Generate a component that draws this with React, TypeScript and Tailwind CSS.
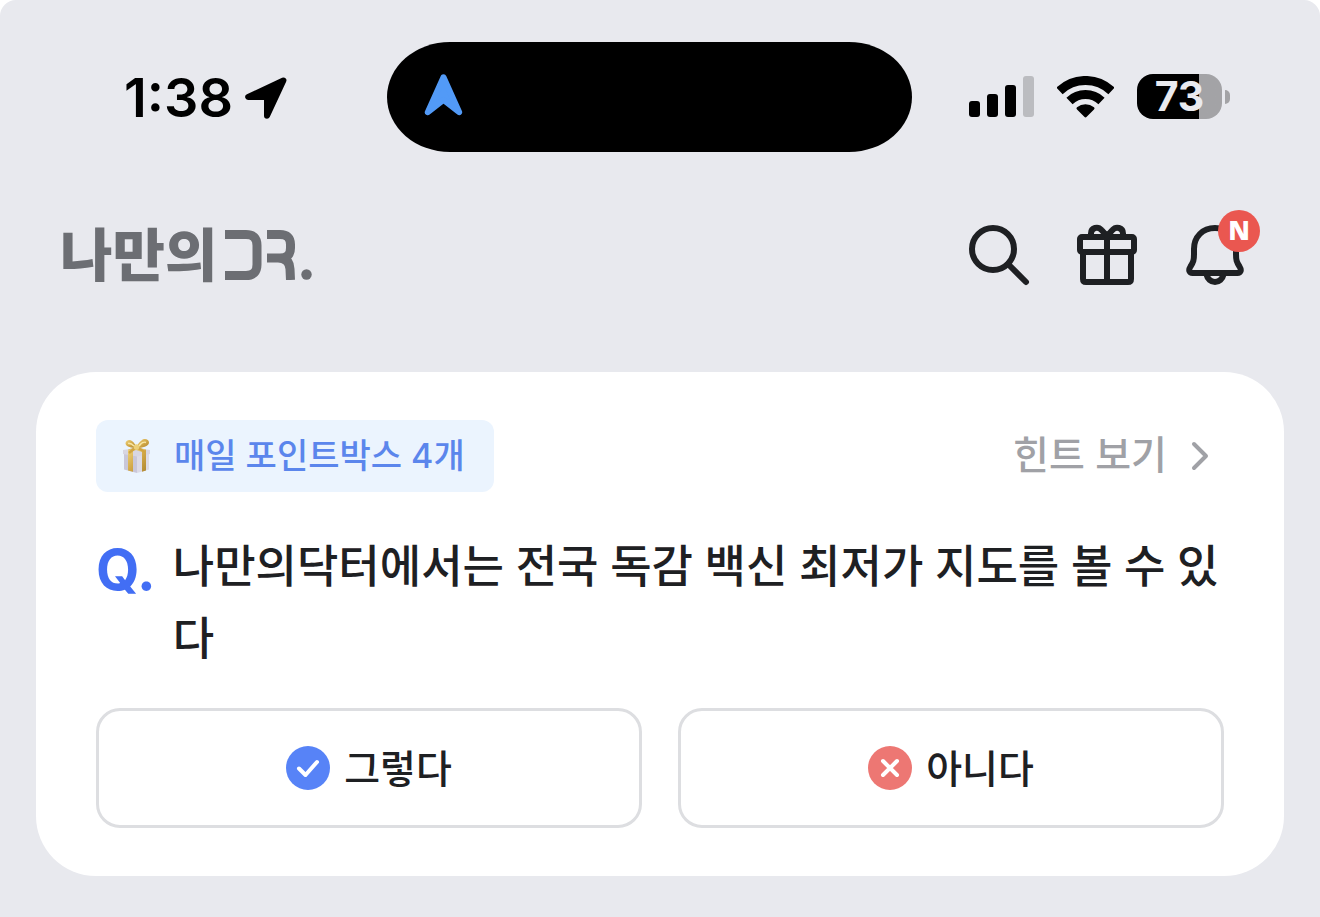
const latin = "font-['Inter','Noto_Sans_CJK_KR',sans-serif]";

function LocationArrow() {
  return (
    <svg className="size-[42px]" viewBox="0 0 42 42" aria-hidden="true">
      <path d="M38.4 3.4 3.2 20H22v18.8Z" fill="#000" stroke="#000" strokeWidth="6" strokeLinejoin="round" />
    </svg>
  );
}

function NavigationArrow() {
  return (
    <svg className="h-[42px] w-[39px]" viewBox="0 0 39 42" aria-hidden="true">
      <path d="M19.5 3.3 3.8 38.2 19.5 25.8 35.2 38.2Z" fill="#529af7" stroke="#529af7" strokeWidth="6" strokeLinejoin="round" />
    </svg>
  );
}

function Signal() {
  return (
    <svg className="h-[42px] w-[65px]" viewBox="0 0 65 42" aria-label="신호 세기" role="img">
      <rect x="0" y="25" width="11" height="16" rx="3" />
      <rect x="18" y="18" width="11" height="23" rx="3" />
      <rect x="36" y="9" width="11" height="32" rx="3" />
      <rect x="54" y="0" width="11" height="41" rx="3" fill="#bbbcc0" />
    </svg>
  );
}

function Wifi() {
  return (
    <svg className="h-[42px] w-[57px]" viewBox="0 0 57 42" aria-label="와이파이" role="img">
      <g fill="none" stroke="#000" strokeWidth="9">
        <path d="M2.500 14.900a37.600 37.600 0 0 1 52 0" />
        <path d="M12.500 24.900a23.300 23.300 0 0 1 32 0" />
      </g>
      <path d="M20 31.200a14 14 0 0 1 17 0q1.200 1 0 2.200l-7.300 7.400q-1.200 1.200-2.400 0L20 33.400q-1.200-1.200 0-2.200Z" />
    </svg>
  );
}

function Battery() {
  return (
    <div className="flex items-center gap-[3px]" aria-label="배터리 73%">
      <div className="flex h-[45px] w-[85px] items-center justify-center rounded-2xl bg-linear-to-r from-black from-73% to-[#a3a3a6] to-73%">
        <span className={`${latin} text-[41px] leading-none font-bold text-[#e9eaef]`}>73</span>
      </div>
      <div className="h-[14px] w-[5px] rounded-r-full bg-[#a3a3a6]" />
    </div>
  );
}

function Logo() {
  return (
    <h1 className="flex items-center gap-2 text-[#6c6e73]" aria-label="나만의DR.">
      <span className="pb-2 text-[57px] leading-[64px] font-black">나만의</span>
      <svg className="h-[50px] w-[87px]" viewBox="0 0 87 50" aria-hidden="true">
        <g fill="none" stroke="currentColor" strokeWidth="9">
          <path d="M0 4.500H21Q32 4.500 32 15.500V34.500Q32 45.500 21 45.500H0" />
          <path d="M42 4.500H55Q65.500 4.500 65.500 14.500V18Q65.500 28 55 28H42M53 28Q64.500 28 65 39L65.500 50" />
        </g>
        <circle cx="81.500" cy="44.500" r="5.200" fill="currentColor" />
      </svg>
    </h1>
  );
}

const stroke = {
  fill: "none",
  stroke: "#1e2023",
  strokeWidth: 6,
  strokeLinecap: "round",
  strokeLinejoin: "round",
} as const;

function SearchIcon() {
  return (
    <svg className="size-[72px]" viewBox="0 0 72 72" aria-hidden="true" {...stroke}>
      <circle cx="30" cy="30" r="21" />
      <path d="m45 45 18 18" />
    </svg>
  );
}

function GiftIcon() {
  return (
    <svg className="size-[72px]" viewBox="0 0 72 72" aria-hidden="true" {...stroke}>
      <rect x="9" y="18" width="54" height="15" rx="2" />
      <path d="M12 33v27q0 3 3 3h42q3 0 3-3V33M36 18v45" />
      <path d="M20 17v-2.500c0-6 7-7.500 10.500-3.500L36 17l5.500-6C45 7 52 8.500 52 14.500V17" />
    </svg>
  );
}

function BellIcon() {
  return (
    <svg className="size-[72px]" viewBox="0 0 72 72" aria-hidden="true" {...stroke}>
      <path d="M36 9C23.500 9 15 18 15 30v5c0 6-.5 8-3.500 12.500C9 51.500 10.500 54 13.500 54h45c3 0 4.500-2.500 2-6.500C57.500 43 57 41 57 35v-5C57 18 48.500 9 36 9Z" />
      <path d="M27.500 55.500c1 4.500 4.500 7.500 8.500 7.500s7.500-3 8.500-7.500" />
    </svg>
  );
}

function GiftBox() {
  return (
    <svg className="h-[36px] w-[30px]" viewBox="0 0 30 36" aria-hidden="true">
      <defs>
        <linearGradient id="gold" x1="0" y1="0" x2="1" y2="1">
          <stop offset="0" stopColor="#efd27a" />
          <stop offset=".5" stopColor="#d2a848" />
          <stop offset="1" stopColor="#b08832" />
        </linearGradient>
      </defs>
      <path d="m2 13 13 2v20L2 31.500Z" fill="#c9c7d9" />
      <path d="m15 15 12-2v18.500L15 35Z" fill="#dddbe6" />
      <path d="m1 12 13-2 14 2v4l-13 2.500L1 16Z" fill="#d8d6e2" />
      <path d="m6 11.500 5 .8v21.500l-5-1.400ZM20 12.500l4-1v21l-4 1.200Z" fill="url(#gold)" />
      <path d="m6 11.500 8-2.500 10 2.500-4 2.500-6-2-4 1.500Z" fill="#dfc06a" />
      <path d="M14 10C10 10 4 9 3.500 5.500 3.500 2 8 1 10 3c2 1.500 4 4 4 7Z" fill="url(#gold)" />
      <path d="M15 10c5 0 12-1.500 12-5.500C27 1 22 0 19.500 2.500 17 4 15 7 15 10Z" fill="url(#gold)" />
      <path d="M12 8c-2-2-4-3-6-2.500M17 8c2-3 5-4.500 7-3.500" fill="none" stroke="#f8e7a4" strokeWidth="1.500" />
      <path d="m13 10-6 5M16 10l7 4" stroke="#d1a442" strokeWidth="2.500" />
      <circle cx="14.500" cy="9" r="2.800" fill="#ecd078" />
    </svg>
  );
}

function Chevron() {
  return (
    <svg className="h-[30px] w-[18px]" viewBox="0 0 18 30" fill="none" stroke="#a0a1a6" strokeWidth="4" strokeLinecap="round" strokeLinejoin="round" aria-hidden="true">
      <path d="m3 3 12 12L3 27" />
    </svg>
  );
}

function YesIcon() {
  return (
    <svg className="size-11" viewBox="0 0 44 44" fill="none" aria-hidden="true">
      <circle cx="22" cy="22" r="22" fill="#5783f7" />
      <path d="m13 22.500 6.500 6.500L31 16" stroke="#fff" strokeWidth="4" strokeLinecap="round" strokeLinejoin="round" />
    </svg>
  );
}

function NoIcon() {
  return (
    <svg className="size-11" viewBox="0 0 44 44" fill="none" aria-hidden="true">
      <circle cx="22" cy="22" r="22" fill="#ed7773" />
      <path d="m15 15 14 14M29 15 15 29" stroke="#fff" strokeWidth="4" strokeLinecap="round" />
    </svg>
  );
}

function StatusBar() {
  return (
    <div className="flex items-center pt-[42px] pr-[90px] pl-[124px]">
      <div className="flex items-center gap-3 pt-0.5">
        <span className={`${latin} text-[54px] leading-none font-semibold text-black`}>1:38</span>
        <LocationArrow />
      </div>
      <div className="ml-[100px] flex h-[110px] w-[525px] items-center rounded-[63px/55px] bg-black pr-9 pb-1 pl-[37px]">
        <NavigationArrow />
      </div>
      <div className="ml-auto flex items-center gap-[23px] pb-px">
        <Signal />
        <Wifi />
        <Battery />
      </div>
    </div>
  );
}

export default function App() {
  return (
    <div className="min-h-screen bg-white font-['Noto_Sans_CJK_KR',sans-serif] text-[#1e2023]">
      <div className="min-h-screen rounded-t-2xl bg-[#e8e9ee] pb-10">
        <StatusBar />
        <header className="mt-[67px] flex items-center justify-between pr-[69px] pl-[60px]">
          <Logo />
          <nav className="flex gap-9">
            <button type="button" aria-label="검색">
              <SearchIcon />
            </button>
            <button type="button" aria-label="선물">
              <GiftIcon />
            </button>
            <button type="button" aria-label="새 알림" className="relative">
              <BellIcon />
              <span className="absolute -top-[9px] -right-[9px] flex size-[42px] items-center justify-center rounded-full bg-[#ea5750] pb-0.5 font-['Open_Sans',sans-serif] text-[26px] leading-none font-extrabold text-white">
                N
              </span>
            </button>
          </nav>
        </header>
        <main className="mx-9 mt-[81px] rounded-[60px] bg-white px-[60px] py-12">
          <div className="flex items-center justify-between">
            <div className="flex h-[72px] items-center gap-[22px] rounded-xl bg-[#ebf4fe] pr-[29px] pl-[26px]">
              <GiftBox />
              <span className={`${latin} text-[34px] leading-none font-medium text-[#5b86ec]`}>매일 포인트박스 4개</span>
            </div>
            <a href="#hint" className="flex items-center gap-6 pr-[15px] text-[39px] leading-none font-medium text-[#a0a1a6]">
              <span className="pb-1 font-['Inter','Noto_Sans_CJK_KR',sans-serif]">힌트 보기</span>
              <Chevron />
            </a>
          </div>
          <div className="mt-[38px] flex gap-[17px]">
            <span className={`${latin} pt-1 text-[56px] leading-[72px] font-bold text-[#426ef4]`}>Q.</span>
            <p className="font-['Open_Sans','Noto_Sans_CJK_KR',sans-serif] text-[45px] leading-[72px] font-medium break-all">
              나만의닥터에서는 전국 독감 백신 최저가 지도를 볼 수 있다
            </p>
          </div>
          <div className="mt-[34px] grid grid-cols-2 gap-9">
            <button type="button" className="flex h-[120px] items-center justify-center gap-[14px] rounded-3xl border-3 border-[#dddee1] text-[39px] leading-none font-medium">
              <YesIcon />
              <span className="pb-1">그렇다</span>
            </button>
            <button type="button" className="flex h-[120px] items-center justify-center gap-[14px] rounded-3xl border-3 border-[#dddee1] text-[39px] leading-none font-medium">
              <NoIcon />
              <span className="pb-1">아니다</span>
            </button>
          </div>
        </main>
      </div>
    </div>
  );
}
